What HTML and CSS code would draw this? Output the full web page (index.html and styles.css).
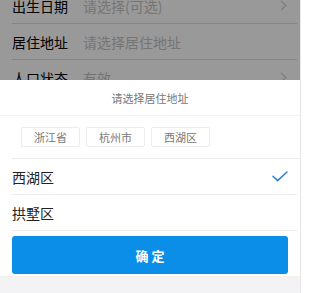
FILE: index.html
```html
<!DOCTYPE html>
<html lang="zh-CN">
<head>
<meta charset="utf-8">
<title>选择居住地址</title>
<link rel="stylesheet" href="styles.css">
</head>
<body>
<div class="phone">
  <div class="list">
    <div class="row"><span class="label">出生日期</span><span class="value">请选择(可选)</span><span class="arrow"></span></div>
    <div class="row"><span class="label">居住地址</span><span class="value">请选择居住地址</span></div>
    <div class="row"><span class="label">人口状态</span><span class="value">有效</span><span class="arrow"></span></div>
    <div class="row"><span class="label">备注</span><span class="value"></span></div>
  </div>
  <div class="mask"></div>
  <div class="sheet">
    <div class="sheet-title">请选择居住地址</div>
    <div class="tabs">
      <span class="tab">浙江省</span>
      <span class="tab">杭州市</span>
      <span class="tab">西湖区</span>
    </div>
    <div class="options">
      <div class="option"><span>西湖区</span>
        <svg class="check" viewBox="0 0 16 11" width="16" height="11"><path d="M1 5.2 L5.6 9.6 L15 1" fill="none" stroke="#2a7fd4" stroke-width="1.5" stroke-linecap="round" stroke-linejoin="round"/></svg>
      </div>
      <div class="option"><span>拱墅区</span></div>
    </div>
    <div class="actions"><button class="confirm">确 定</button></div>
  </div>
  <div class="footer"></div>
</div>
</body>
</html>
```
FILE: styles.css
```css
html, body {
  margin: 0;
  padding: 0;
  background: #ffffff;
  font-family: "Noto Sans CJK SC", "Noto Sans", sans-serif;
}
.phone {
  position: relative;
  width: 300px;
  height: 293px;
  overflow: hidden;
  background: #ffffff;
  border-right: 1px solid #e6e6e6;
}
.list {
  background: #ffffff;
  margin-top: -12px;
}
.row {
  display: flex;
  align-items: center;
  height: 35px;
  margin-left: 12px;
  margin-right: 3px;
  border-bottom: 1px solid #dcdcdc;
  font-size: 14px;
}
.label {
  width: 71px;
  color: #000;
}
.value {
  flex: 1;
  color: #c4c4c4;
}
.arrow {
  width: 6px;
  height: 6px;
  border-top: 1.5px solid #c8c8c8;
  border-right: 1.5px solid #c8c8c8;
  transform: rotate(45deg);
  margin-right: 12px;
}
.mask {
  position: absolute;
  left: 0;
  right: 0;
  top: 0;
  height: 80px;
  background: rgba(0, 0, 0, 0.4);
}
.sheet {
  position: absolute;
  left: 0;
  right: 0;
  top: 80px;
  height: 196px;
  background: #ffffff;
  display: flex;
  flex-direction: column;
}
.footer {
  position: absolute;
  left: 0;
  right: 0;
  top: 276px;
  bottom: 0;
  background: #f3f3f5;
  border-top: 1px solid #f6eee8;
}
.sheet-title {
  height: 33px;
  padding-top: 2px;
  line-height: 33px;
  text-align: center;
  font-size: 11px;
  color: #777;
  border-bottom: 1px solid #f0f0f0;
}
.tabs {
  display: flex;
  gap: 6px;
  padding: 11px 0 11px 9px;
  margin-left: 12px;
  border-bottom: 1px solid #ececec;
}
.tab {
  height: 18px;
  line-height: 18px;
  padding: 0 12px;
  border: 1px solid #ececec;
  border-radius: 2px;
  font-size: 11px;
  color: #777;
}
.option {
  display: flex;
  align-items: center;
  justify-content: space-between;
  height: 35px;
  margin-left: 12px;
  margin-right: 3px;
  border-bottom: 1px solid #ececec;
  font-size: 14px;
  color: #222;
}
.check {
  margin-right: 9px;
}
.actions {
  padding: 5px 12px 3px;
}
.confirm {
  display: block;
  width: 100%;
  height: 38px;
  border: none;
  border-radius: 3px;
  background: #0b8ee8;
  color: #ffffff;
  font-family: "Noto Sans CJK SC", "Noto Sans", sans-serif;
  font-size: 13px;
  font-weight: bold;
  padding: 0;
}
```
